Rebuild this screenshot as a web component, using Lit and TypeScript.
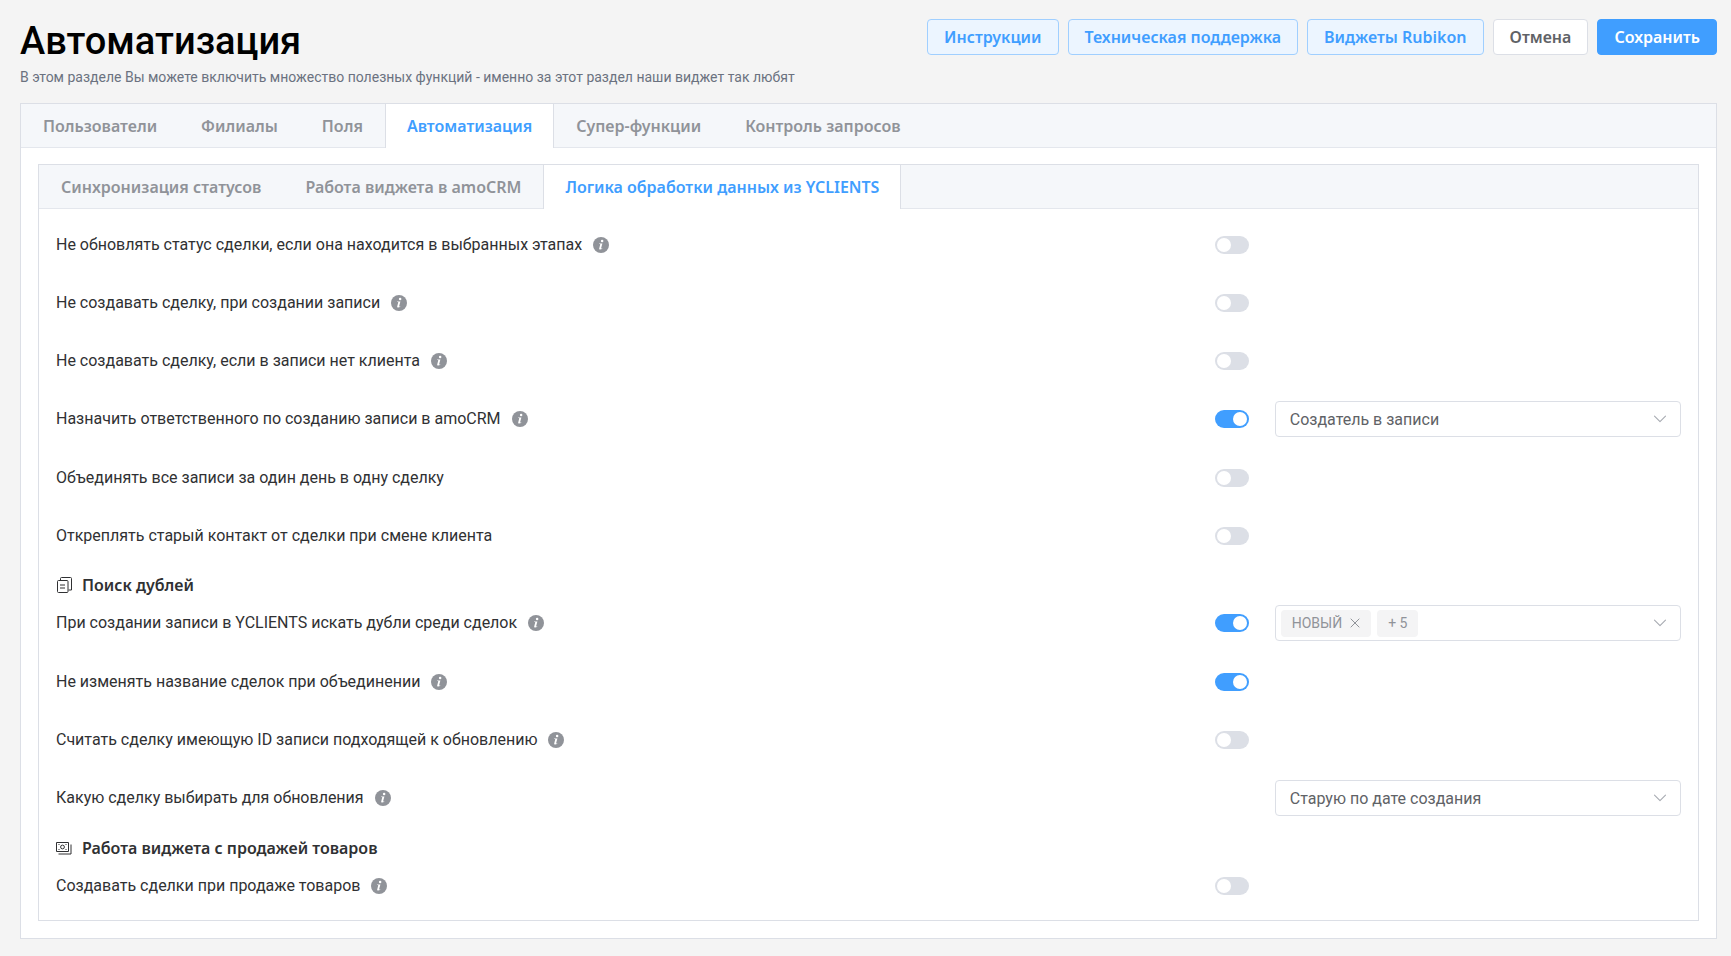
import { LitElement, html, css, svg, nothing } from "lit";
import { customElement, property, state } from "lit/decorators.js";
import { classMap } from "lit/directives/class-map.js";

interface Setting {
  id: string;
  label: string;
  info?: boolean;
  on?: boolean;
  options?: string[];
  tags?: string[];
  more?: number;
}

interface Group {
  title?: string;
  icon?: "copy" | "money";
  settings: Setting[];
}

const GROUPS: Group[] = [
  {
    settings: [
      { id: "keep-status", label: "Не обновлять статус сделки, если она находится в выбранных этапах", info: true, on: false },
      { id: "no-deal", label: "Не создавать сделку, при создании записи", info: true, on: false },
      { id: "no-client", label: "Не создавать сделку, если в записи нет клиента", info: true, on: false },
      { id: "owner", label: "Назначить ответственного по созданию записи в amoCRM", info: true, on: true, options: ["Создатель в записи"] },
      { id: "merge-day", label: "Объединять все записи за один день в одну сделку", on: false },
      { id: "detach", label: "Откреплять старый контакт от сделки при смене клиента", on: false },
    ],
  },
  {
    title: "Поиск дублей",
    icon: "copy",
    settings: [
      { id: "find-dupes", label: "При создании записи в YCLIENTS искать дубли среди сделок", info: true, on: true, tags: ["НОВЫЙ"], more: 5 },
      { id: "keep-name", label: "Не изменять название сделок при объединении", info: true, on: true },
      { id: "by-id", label: "Считать сделку имеющую ID записи подходящей к обновлению", info: true, on: false },
      { id: "which", label: "Какую сделку выбирать для обновления", info: true, options: ["Старую по дате создания"] },
    ],
  },
  {
    title: "Работа виджета с продажей товаров",
    icon: "money",
    settings: [{ id: "goods", label: "Создавать сделки при продаже товаров", info: true, on: false }],
  },
];

const chevron = html`<svg class="chevron" viewBox="0 0 14 14" aria-hidden="true">
  <path d="M1.5 4.2 7 9.7l5.500-5.500" fill="none" stroke="#a8abb2" stroke-width="1.100" stroke-linecap="round" stroke-linejoin="round" />
</svg>`;

const infoIcon = html`<svg class="info" viewBox="0 0 16 16" role="img" aria-label="Подсказка">
  <circle cx="8" cy="8" r="8" fill="#909399" />
  <circle cx="9.100" cy="4.100" r="1.250" fill="#fff" />
  <path d="M6.100 6.400h3.300l-1.300 4.800c-.1.500.2.500 1.100 0l.1.500c-1.100.9-3.500 1.400-3.100-.3l1-3.900c.1-.4-.2-.5-1.100-.5z" fill="#fff" />
</svg>`;

const sectionIcons = {
  copy: svg`<path d="M1.500 4.500q0-1 1-1h8.500q1 0 1 1v10q0 1-1 1h-8.500q-1 0-1-1z M4 8h5 M4 11h5 M4.500 3V1.500q0-1 1-1H14.500q1 0 1 1V13h-3" />`,
  money: svg`<path d="M.5 2.500h12v9H.5z M2.500 14H15V4.500" /><circle cx="6.500" cy="7" r="1.900" /><path d="M2.500 4.500h1 M9.500 9.500h1 M9.500 4.500h1 M2.500 9.500h1" />`,
};

const base = css`
  * {
    box-sizing: border-box;
  }
  button,
  input,
  select {
    margin: 0;
    font: inherit;
  }
`;

@customElement("tab-strip")
class TabStrip extends LitElement {
  @property({ type: Array }) tabs: string[] = [];
  @property({ type: Number }) active = 0;

  static styles = [
    base,
    css`
      :host {
        display: block;
      }
      .strip {
        display: flex;
        height: 44px;
        background: #f5f7fa;
        border-bottom: 1px solid #e4e7ed;
      }
      .tab {
        height: 44px;
        padding: 0 21px;
        border: 1px solid transparent;
        border-width: 0 1px;
        background: none;
        color: #909399;
        font-family: "Noto Sans", sans-serif;
        font-size: 16px;
        font-weight: 600;
        white-space: nowrap;
        cursor: pointer;
      }
      .active {
        background: #fff;
        border-color: #dcdfe6;
        color: #409eff;
      }
    `,
  ];

  render() {
    return html`<div class="strip" role="tablist">
      ${this.tabs.map(
        (name, i) => html`<button
          class=${classMap({ tab: true, active: i === this.active })}
          type="button"
          role="tab"
          aria-selected=${i === this.active ? "true" : "false"}
          @click=${() => (this.active = i)}
        >${name}</button>`
      )}
    </div>`;
  }
}

@customElement("setting-row")
class SettingRow extends LitElement {
  @property({ attribute: false }) setting!: Setting;

  static styles = [
    base,
    css`
      :host {
        display: block;
      }
      .row {
        display: grid;
        grid-template-columns: minmax(0, 1fr) 60px 25%;
        align-items: center;
        min-height: 35px;
      }
      .caption {
        display: flex;
        align-items: center;
        gap: 11px;
        line-height: 20px;
      }
      .info {
        width: 16px;
        height: 16px;
        flex: none;
      }
      .switch {
        appearance: none;
        display: flex;
        align-items: center;
        width: 34px;
        height: 18px;
        padding: 0 2px;
        border-radius: 9px;
        background: #dcdfe6;
        cursor: pointer;
      }
      .switch::before {
        content: "";
        width: 14px;
        height: 14px;
        border-radius: 50%;
        background: #fff;
      }
      .switch:checked {
        justify-content: flex-end;
        background: #409eff;
      }
      .field {
        display: grid;
        grid-column: 3;
        align-items: center;
        height: 36px;
        border: 1px solid #dcdfe6;
        border-radius: 4px;
        background: #fff;
      }
      .field > * {
        grid-area: 1 / 1;
      }
      .select {
        appearance: none;
        width: 100%;
        height: 34px;
        padding: 0 36px 0 14px;
        border: 0;
        border-radius: 4px;
        background: none;
        color: #606266;
        font-size: 16px;
      }
      .chevron {
        width: 14px;
        height: 14px;
        margin-right: 13px;
        justify-self: end;
        pointer-events: none;
      }
      .tags {
        display: flex;
        gap: 6px;
        padding-left: 5px;
        justify-self: start;
      }
      .tag {
        display: flex;
        align-items: center;
        gap: 8px;
        height: 27px;
        padding: 0 11px;
        border-radius: 4px;
        background: #f4f4f5;
        color: #909399;
        font-size: 14px;
      }
      .remove {
        display: flex;
        padding: 0;
        border: 0;
        background: none;
        cursor: pointer;
      }
      .cross {
        width: 10px;
        height: 10px;
      }
      .open {
        display: grid;
        align-items: center;
        height: 34px;
        padding: 0;
        border: 0;
        background: none;
        cursor: pointer;
      }
    `,
  ];

  private control(s: Setting) {
    if (s.options) {
      return html`<div class="field">
        <select class="select" aria-label=${s.label}>
          ${s.options.map((o) => html`<option>${o}</option>`)}
        </select>
        ${chevron}
      </div>`;
    }
    if (s.tags) {
      return html`<div class="field">
        <button class="open" type="button" aria-haspopup="listbox" aria-label=${s.label}>${chevron}</button>
        <div class="tags">
          ${s.tags.map(
            (t) => html`<span class="tag">${t}<button class="remove" type="button" aria-label="Удалить">
              <svg class="cross" viewBox="0 0 10 10" aria-hidden="true">
                <path d="M.7.7l8.600 8.600M9.300.7.7 9.300" stroke="#909399" stroke-width="1" fill="none" />
              </svg></button></span>`
          )}
          <span class="tag">+ ${s.more}</span>
        </div>
      </div>`;
    }
    return nothing;
  }

  render() {
    const s = this.setting;
    const hasSwitch = s.on !== undefined;
    return html`<div class="row">
      <div class="caption">
        ${hasSwitch ? html`<label for=${s.id}>${s.label}</label>` : html`<span>${s.label}</span>`}
        ${s.info ? infoIcon : nothing}
      </div>
      ${hasSwitch ? html`<input class="switch" id=${s.id} type="checkbox" role="switch" ?checked=${s.on} />` : nothing}
      ${this.control(s)}
    </div>`;
  }
}

@customElement("app-root")
class AppRoot extends LitElement {
  @state() private groups = GROUPS;

  static styles = [
    base,
    css`
      :host {
        display: block;
        min-height: 100vh;
        padding: 19px 14px 17px 20px;
        box-sizing: border-box;
        background: #f4f4f4;
        color: #303133;
        font-family: Roboto, "Noto Sans", sans-serif;
        font-size: 16px;
      }
      .header {
        display: flex;
        justify-content: space-between;
        align-items: flex-start;
        gap: 24px;
        margin-bottom: 16px;
      }
      .title {
        margin: 0 0 4px;
        color: #000;
        font-size: 38px;
        font-weight: 500;
        line-height: 44px;
      }
      .subtitle {
        margin: 0;
        color: #6b7280;
        font-size: 14px;
        line-height: 20px;
      }
      .actions {
        display: flex;
        gap: 9px;
      }
      .button {
        height: 36px;
        padding: 0 16px;
        border: 1px solid #dcdfe6;
        border-radius: 4px;
        background: #fff;
        color: #606266;
        font-family: "Noto Sans", sans-serif;
        font-weight: 600;
        white-space: nowrap;
        cursor: pointer;
      }
      .plain {
        border-color: #a0cfff;
        background: #ecf5ff;
        color: #409eff;
      }
      .primary {
        border-color: #409eff;
        background: #409eff;
        color: #fff;
      }
      .card {
        border: 1px solid #dcdfe6;
        background: #fff;
      }
      .outer {
        padding: 16px 17px 17px;
      }
      .inner {
        padding: 18px 17px 17px;
      }
      .group {
        display: grid;
        gap: 23px;
        margin: 0 0 22px;
      }
      .group:last-child {
        margin-bottom: 0;
      }
      .section {
        display: flex;
        align-items: center;
        gap: 10px;
        margin: 0 0 10px;
        font-family: "Noto Sans", sans-serif;
        font-size: 16px;
        font-weight: 600;
        line-height: 20px;
      }
      .section-icon {
        width: 16px;
        height: 16px;
        fill: none;
        stroke: #303133;
      }
    `,
  ];

  render() {
    return html`
      <header class="header">
        <div>
          <h1 class="title">Автоматизация</h1>
          <p class="subtitle">В этом разделе Вы можете включить множество полезных функций - именно за этот раздел наши виджет так любят</p>
        </div>
        <div class="actions">
          <button class="button plain" type="button">Инструкции</button>
          <button class="button plain" type="button">Техническая поддержка</button>
          <button class="button plain" type="button">Виджеты Rubikon</button>
          <button class="button" type="button">Отмена</button>
          <button class="button primary" type="button">Сохранить</button>
        </div>
      </header>
      <main class="card">
        <tab-strip
          .tabs=${["Пользователи", "Филиалы", "Поля", "Автоматизация", "Супер-функции", "Контроль запросов"]}
          .active=${3}
        ></tab-strip>
        <div class="outer">
          <div class="card">
            <tab-strip
              .tabs=${["Синхронизация статусов", "Работа виджета в amoCRM", "Логика обработки данных из YCLIENTS"]}
              .active=${2}
            ></tab-strip>
            <div class="inner">
              ${this.groups.map(
                (g) => html`
                  ${g.title
                    ? html`<h2 class="section">
                        <svg class="section-icon" viewBox="0 0 16 16" aria-hidden="true">${sectionIcons[g.icon!]}</svg>
                        ${g.title}
                      </h2>`
                    : nothing}
                  <div class="group">${g.settings.map((s) => html`<setting-row .setting=${s}></setting-row>`)}</div>
                `
              )}
            </div>
          </div>
        </div>
      </main>
    `;
  }
}
